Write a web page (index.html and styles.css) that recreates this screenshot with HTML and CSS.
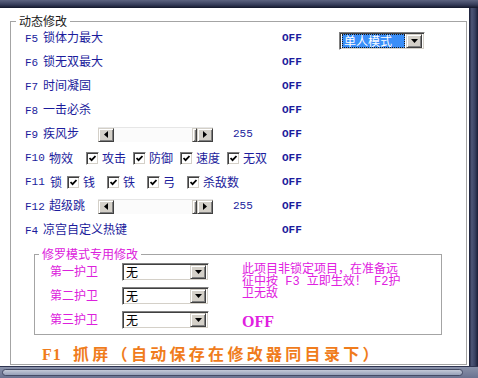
FILE: index.html
```html
<!DOCTYPE html>
<html lang="zh-CN">
<head>
<meta charset="utf-8">
<title>动态修改</title>
<link rel="stylesheet" href="styles.css">
</head>
<body>
<div class="win">
  <div class="titlebar"></div>
  <div class="mid">
    <div class="client">
      <fieldset class="grp main">
        <legend class="lg">动态修改</legend>
        <div class="mainbody">
          <div class="rows">
            <div class="row">
              <span class="lbl"><span class="k">F5</span>锁体力最大</span>
              <span class="off">OFF</span>
              <span class="sel mode">
                <span class="seltxt hl"><span class="focus">单人模式</span></span>
                <span class="btn"><svg width="7" height="4" viewBox="0 0 7 4"><polygon points="0,0 7,0 3.5,4" fill="#000"/></svg></span>
              </span>
            </div>
            <div class="row">
              <span class="lbl"><span class="k">F6</span>锁无双最大</span>
              <span class="off">OFF</span>
            </div>
            <div class="row">
              <span class="lbl"><span class="k">F7</span>时间凝固</span>
              <span class="off">OFF</span>
            </div>
            <div class="row">
              <span class="lbl"><span class="k">F8</span>一击必杀</span>
              <span class="off">OFF</span>
            </div>
            <div class="row">
              <span class="lbl short"><span class="k">F9</span>疾风步</span>
              <span class="slider">
                <span class="sbtn"><svg width="4" height="7" viewBox="0 0 4 7"><polygon points="4,0 4,7 0,3.5" fill="#000"/></svg></span>
                <span class="track"></span>
                <span class="thumb"></span>
                <span class="sbtn"><svg width="4" height="7" viewBox="0 0 4 7"><polygon points="0,0 0,7 4,3.5" fill="#000"/></svg></span>
              </span>
              <span class="val">255</span>
              <span class="off">OFF</span>
            </div>
            <div class="row">
              <span class="lbl checks c10">
                <span class="k k3">F10</span><span class="t">物效</span>
                <span class="cb first"><svg width="7" height="7" viewBox="0 0 7 7"><polyline points="0.5,3 2.6,5.2 6.5,1" fill="none" stroke="#000" stroke-width="1.8"/></svg></span><span class="t">攻击</span>
                <span class="cb"><svg width="7" height="7" viewBox="0 0 7 7"><polyline points="0.5,3 2.6,5.2 6.5,1" fill="none" stroke="#000" stroke-width="1.8"/></svg></span><span class="t">防御</span>
                <span class="cb"><svg width="7" height="7" viewBox="0 0 7 7"><polyline points="0.5,3 2.6,5.2 6.5,1" fill="none" stroke="#000" stroke-width="1.8"/></svg></span><span class="t">速度</span>
                <span class="cb"><svg width="7" height="7" viewBox="0 0 7 7"><polyline points="0.5,3 2.6,5.2 6.5,1" fill="none" stroke="#000" stroke-width="1.8"/></svg></span><span class="t">无双</span>
              </span>
              <span class="off">OFF</span>
            </div>
            <div class="row">
              <span class="lbl checks c11">
                <span class="k k3">F11</span><span class="t">锁</span>
                <span class="cb first"><svg width="7" height="7" viewBox="0 0 7 7"><polyline points="0.5,3 2.6,5.2 6.5,1" fill="none" stroke="#000" stroke-width="1.8"/></svg></span><span class="t">钱</span>
                <span class="cb"><svg width="7" height="7" viewBox="0 0 7 7"><polyline points="0.5,3 2.6,5.2 6.5,1" fill="none" stroke="#000" stroke-width="1.8"/></svg></span><span class="t">铁</span>
                <span class="cb"><svg width="7" height="7" viewBox="0 0 7 7"><polyline points="0.5,3 2.6,5.2 6.5,1" fill="none" stroke="#000" stroke-width="1.8"/></svg></span><span class="t">弓</span>
                <span class="cb"><svg width="7" height="7" viewBox="0 0 7 7"><polyline points="0.5,3 2.6,5.2 6.5,1" fill="none" stroke="#000" stroke-width="1.8"/></svg></span><span class="t">杀敌数</span>
              </span>
              <span class="off">OFF</span>
            </div>
            <div class="row">
              <span class="lbl short"><span class="k k3">F12</span>超级跳</span>
              <span class="slider">
                <span class="sbtn"><svg width="4" height="7" viewBox="0 0 4 7"><polygon points="4,0 4,7 0,3.5" fill="#000"/></svg></span>
                <span class="track"></span>
                <span class="thumb"></span>
                <span class="sbtn"><svg width="4" height="7" viewBox="0 0 4 7"><polygon points="0,0 0,7 4,3.5" fill="#000"/></svg></span>
              </span>
              <span class="val">255</span>
              <span class="off">OFF</span>
            </div>
            <div class="row">
              <span class="lbl"><span class="k">F4</span>凉宫自定义热键</span>
              <span class="off">OFF</span>
            </div>
          </div>

          <fieldset class="grp sub">
            <legend class="lg sublg">修罗模式专用修改</legend>
            <div class="subbody">
              <div class="guards">
                <div class="guard">
                  <span class="glbl">第一护卫</span>
                  <span class="sel gsel">
                    <span class="seltxt">无</span>
                    <span class="btn"><svg width="7" height="4" viewBox="0 0 7 4"><polygon points="0,0 7,0 3.5,4" fill="#000"/></svg></span>
                  </span>
                </div>
                <div class="guard">
                  <span class="glbl">第二护卫</span>
                  <span class="sel gsel">
                    <span class="seltxt">无</span>
                    <span class="btn"><svg width="7" height="4" viewBox="0 0 7 4"><polygon points="0,0 7,0 3.5,4" fill="#000"/></svg></span>
                  </span>
                </div>
                <div class="guard">
                  <span class="glbl">第三护卫</span>
                  <span class="sel gsel">
                    <span class="seltxt">无</span>
                    <span class="btn"><svg width="7" height="4" viewBox="0 0 7 4"><polygon points="0,0 7,0 3.5,4" fill="#000"/></svg></span>
                  </span>
                </div>
              </div>
              <div class="note">
                <p class="notetxt">此项目非锁定项目，在准备远<br>征中按 F3 立即生效！ F2护<br>卫无敌</p>
                <p class="bigoff">OFF</p>
              </div>
            </div>
          </fieldset>

          <p class="f1"><span class="f1k">F1</span>抓屏（自动保存在修改器同目录下）</p>
        </div>
      </fieldset>
    </div>
    <div class="rframe"></div>
  </div>
  <div class="bottombar"><div class="groove"></div></div>
</div>
</body>
</html>
```

FILE: styles.css
```css
* { box-sizing: border-box; }
html, body { margin: 0; padding: 0; }
body {
  width: 478px;
  height: 378px;
  overflow: hidden;
  background: #fff;
  font-family: "Noto Sans CJK SC", sans-serif;
  font-size: 12px;
  line-height: 14px;
}
p { margin: 0; }

.win { width: 478px; height: 378px; display: flex; flex-direction: column; }
.titlebar {
  flex: none;
  height: 8px;
  background: linear-gradient(#5c6380, #343b58 60%, #12162a);
}
.mid { flex: none; height: 358px; display: flex; }
.client { flex: none; width: 469px; background: #fff; }
.rframe {
  flex: 1;
  background: linear-gradient(to right, #181c34, #4e5676 30%, #3a4262 65%, #1a1e36);
}
.bottombar {
  flex: 1;
  border-top: 1px solid #2e3450;
  background: linear-gradient(#8a92aa, #6a7290);
  padding: 2px 15px 2px 2px;
}
.groove {
  height: 7px;
  border-radius: 4px;
  border: 1px solid #454c66;
  background: linear-gradient(#c4cad8, #96a0b8);
}

/* group boxes */
.grp {
  margin: 0;
  padding: 0;
  min-width: 0;
  border: 1px solid #a4a4a4;
}
.lg {
  height: 12px;
  line-height: 12px;
  font-size: 12px;
  padding: 0 3px;
  color: #1a1a1a;
}
.main { margin: 7px 2px 0 10px; height: 350px; }
.main > .lg { margin-left: 5px; }
.mainbody { padding: 0 0 0 14px; }

.rows { margin-top: -1px; color: #1c1c9c; }
.row { display: flex; align-items: center; height: 24px; }
.lbl { flex: none; width: 257px; white-space: nowrap; }
.lbl.short { width: 73px; }
.k {
  display: inline-block;
  width: 18px;
  font-family: "Liberation Mono", monospace;
  font-size: 11px;
}
.k.k3 { width: 24px; }
.c11 .k3 { width: 25px; }
.off {
  flex: none;
  width: 57px;
  font-family: "Liberation Mono", monospace;
  font-weight: bold;
  font-size: 11px;
}
.val {
  flex: none;
  width: 49px;
  margin-left: 20px;
  font-family: "Liberation Mono", monospace;
  font-size: 11px;
}

/* checkboxes */
.checks { display: flex; align-items: center; }
.cb {
  flex: none;
  width: 13px;
  height: 13px;
  margin: 0 3px 0 7px;
  border: 1px solid;
  border-color: #808080 #ffffff #ffffff #808080;
  box-shadow: inset 1px 1px #404040, inset -1px -1px #d4d0c8;
  background: #fff;
  display: flex;
  align-items: center;
  justify-content: center;
}
.c10 .cb.first { margin-left: 13px; }
.c11 .cb { margin-left: 12px; }
.c11 .cb.first { margin-left: 5px; }

/* slider (scrollbar) */
.slider {
  flex: none;
  width: 115px;
  height: 15px;
  display: flex;
  background: #f4f4f4;
  border-top: 1px solid #e6e6e6;
}
.sbtn, .btn, .thumb {
  background: #d4d0c8;
  border: 1px solid;
  border-color: #d4d0c8 #404040 #404040 #d4d0c8;
  box-shadow: inset 1px 1px #ffffff, inset -1px -1px #808080;
  display: flex;
  align-items: center;
  justify-content: center;
}
.sbtn { flex: none; width: 16px; height: 14px; }
.track { flex: 1; background: #fbfbfb; }
.thumb { flex: none; width: 5px; height: 14px; }

/* selects */
.sel {
  flex: none;
  display: flex;
  border: 1px solid;
  border-color: #808080 #ffffff #ffffff #808080;
  box-shadow: inset 1px 1px #404040, inset -1px -1px #d4d0c8;
  background: #fff;
  padding: 1px 2px 1px 2px;
}
.sel .btn { flex: none; width: 16px; height: 100%; }
.seltxt {
  flex: 1;
  display: flex;
  align-items: center;
  color: #000;
  font-size: 12px;
  line-height: 14px;
  padding-left: 1px;
  white-space: nowrap;
}
.mode {
  width: 86px;
  height: 18px;
  align-self: flex-start;
  margin-top: 6px;
}
.hl { background: #3a8ef8; color: #fff; padding: 0; margin-right: 1px; }
.focus {
  flex: 1;
  display: flex;
  align-items: center;
  height: 100%;
  border: 1px dotted #1a1a1a;
  padding-left: 1px;
  line-height: 12px;
}

/* sub group */
.sub { margin: 6px 24px 0 9px; }
.sublg { margin-left: 4px; color: #dc20dc; }
.subbody { display: flex; padding: 3px 0 4px 15px; }
.guards { flex: none; width: 192px; display: flex; flex-direction: column; gap: 6px; }
.guard { display: flex; align-items: center; height: 18px; }
.glbl { flex: none; width: 72px; color: #dc20dc; margin-top: -3px; }
.gsel { width: 87px; height: 18px; }
.note { color: #e020e0; white-space: nowrap; }
.notetxt {
  line-height: 12px;
  font-size: 12px;
  padding-top: 1px;
  font-family: "Liberation Mono", "Noto Sans CJK SC", monospace;
}
.bigoff {
  margin-top: 14px;
  font-family: "Liberation Serif", serif;
  font-weight: bold;
  font-size: 16px;
  line-height: 16px;
  color: #e020e0;
}

.f1 {
  margin: 9px 0 0 17px;
  height: 18px;
  line-height: 18px;
  font-size: 16px;
  font-weight: bold;
  color: #f07c1c;
  letter-spacing: 3.3px;
  white-space: nowrap;
}
.f1k {
  display: inline-block;
  width: 31px;
  letter-spacing: 1px;
  font-family: "Liberation Serif", serif;
}
```
